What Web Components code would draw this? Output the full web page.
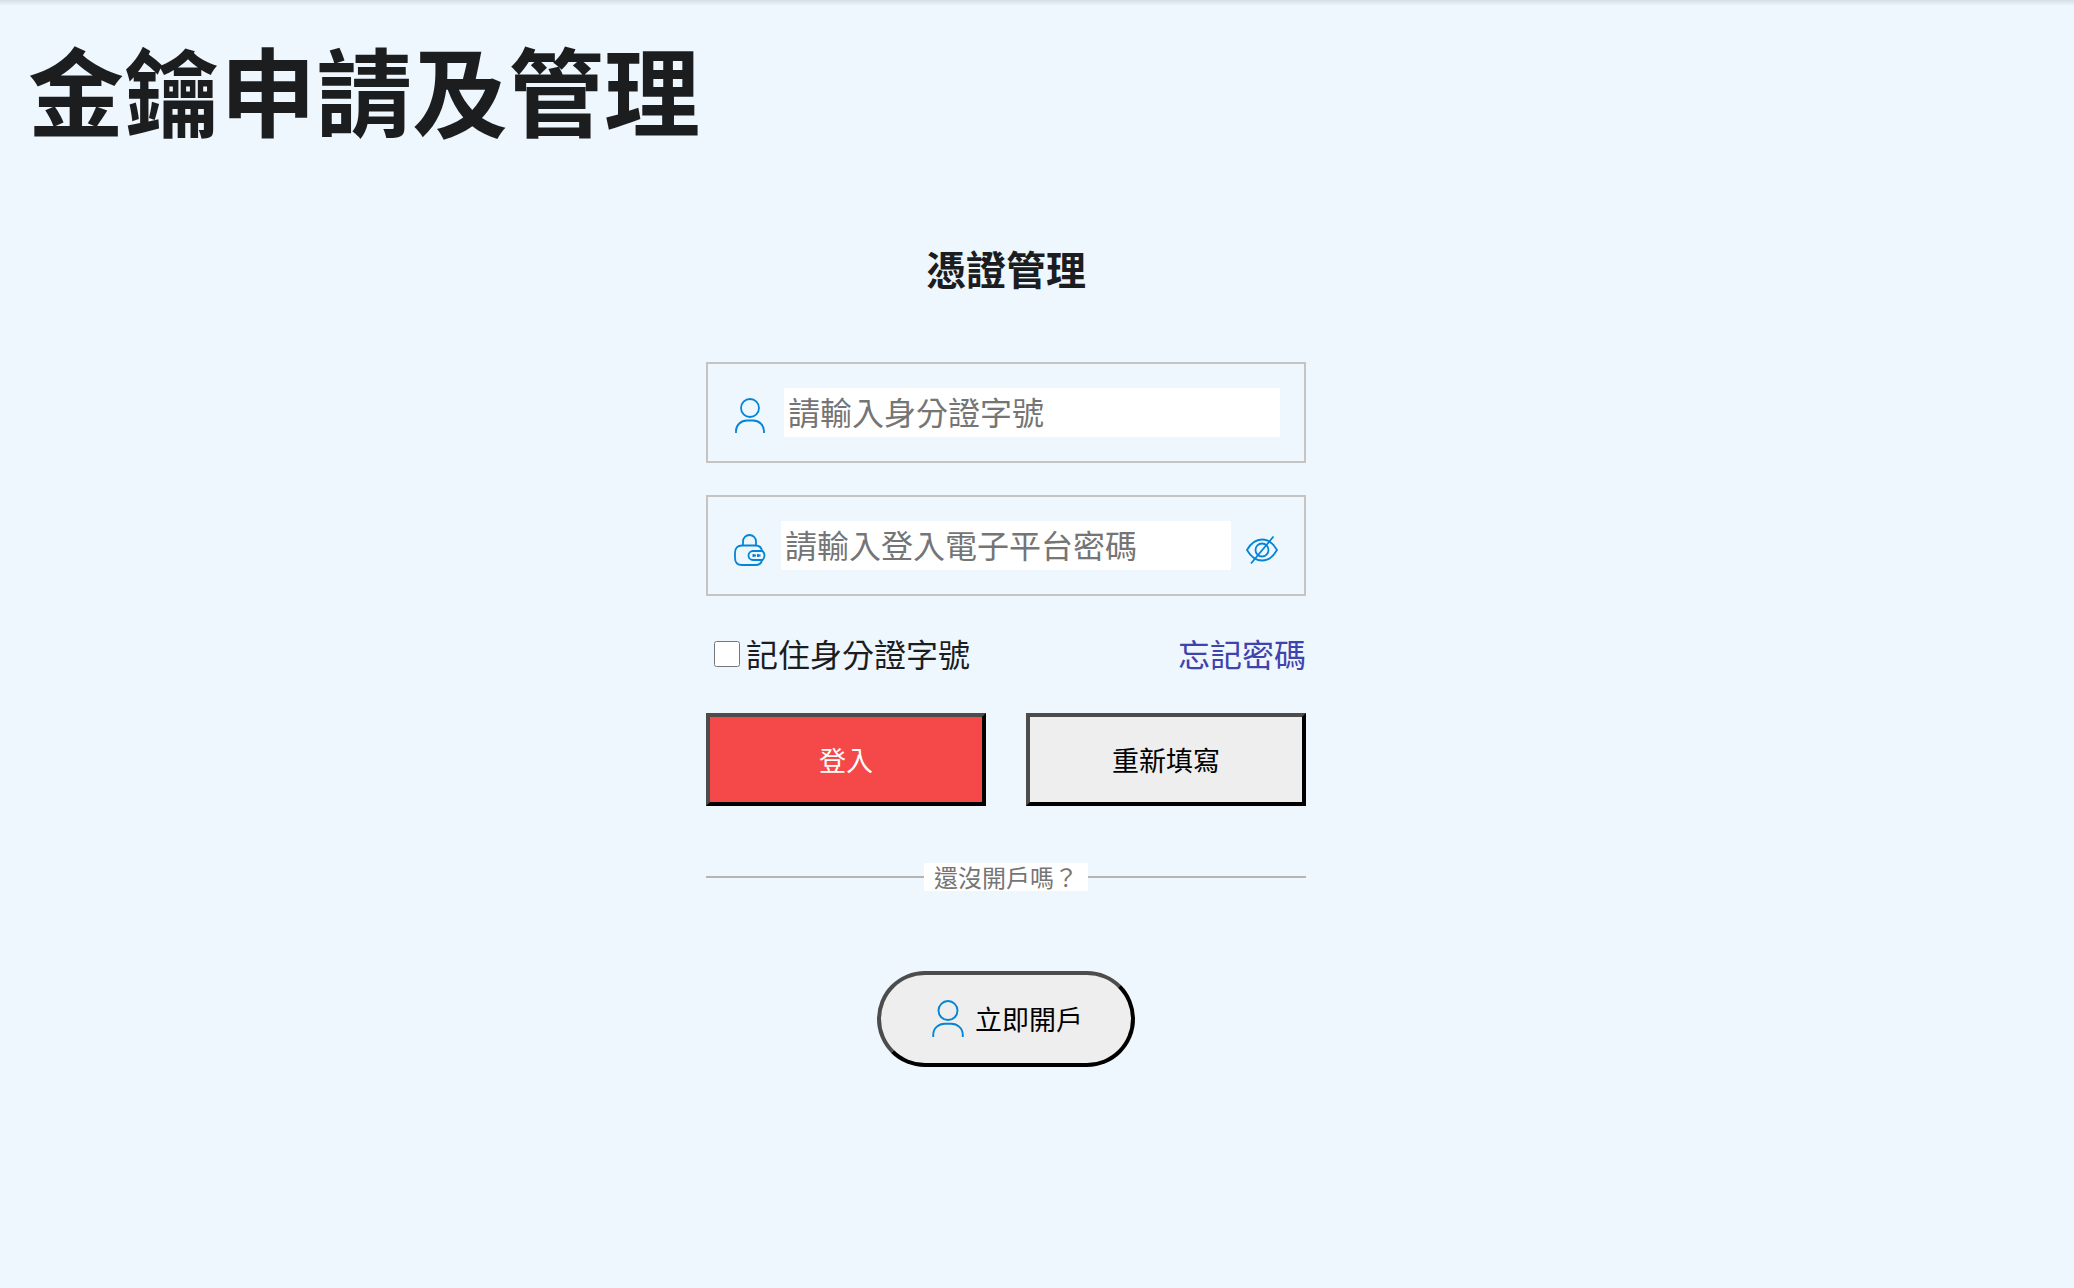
<!DOCTYPE html>
<html lang="zh-Hant">
<head>
<meta charset="utf-8">
<meta name="viewport" content="width=device-width, initial-scale=1">
<title>金鑰申請及管理</title>
<style>
  body {
    margin: 0;
    min-height: 100vh;
    background: #eef6fe;
    color: #1c1d1f;
    font: 32px/48px "Noto Sans CJK TC", sans-serif;
  }
</style>
</head>
<body>

<key-page>
  <span slot="title">金鑰申請及管理</span>
  <login-form></login-form>
</key-page>

<script>
class LineIcon extends HTMLElement {
  constructor() {
    super();
    this.attachShadow({ mode : 'open' });
  }

  connectedCallback() {
    let shapes = {
      user: `
        <circle cx="18" cy="10" r="9"/>
        <path d="M4 35v-2C4 27 9 22.5 15 22.5h6c6 0 11 4.5 11 10.5v2"/>`,
      lock: `
        <path d="M11 14v-3.500a6.500 6.500 0 0 1 13 0V14"/>
        <path d="M30 20C29.5 16.5 27.5 14.5 23.5 14.5H10c-4.500 0-7 2.500-7 7V27c0 4.500 2.500 7 7 7h13.500c4 0 6-2 6.500-5"/>
        <path d="M30.500 20H21a4.500 4.500 0 0 0 0 9h9.500c1-1 2-3 2-4.500s-1-3.500-2-4.500z"/>
        <path d="M21.500 23v3M20.500 24.500h3.500M26 23v3M25 24.500h3.500"/>`,
      eye: `
        <path d="M3 19C7 12 12 8.500 18 8.500S29 12 33 19C29 26 24 29.500 18 29.500S7 26 3 19z"/>
        <circle cx="18" cy="19" r="6.500"/>
        <path d="M7 32.500L29.500 5.500"/>`
    };
    this.shadowRoot.innerHTML = `
      <style>
        :host { display: block; width: 36px; height: 36px; }
        svg { display: block; width: 100%; height: 100%; }
      </style>
      <svg viewBox="0 0 36 36" fill="none" stroke="#0585d5" stroke-width="1.8" aria-hidden="true">
        ${shapes[this.getAttribute('name')]}
      </svg>
    `;
  }
}

class KeyPage extends HTMLElement {
  constructor() {
    super();
    this.attachShadow({ mode : 'open' });
    this.shadowRoot.innerHTML = `
      <style>
        :host {
          display: block;
        }
        .edge {
          height: 6px;
          background: linear-gradient(#d5dde6, #eef6fe);
        }
        main {
          padding: 14px 90px 48px 28px;
        }
        h1 {
          margin: 0 0 86px;
          font-size: 96px;
          line-height: 136px;
          font-weight: 700;
        }
      </style>
      <div class="edge"></div>
      <main>
        <h1><slot name="title"></slot></h1>
        <slot></slot>
      </main>
    `;
  }
}

class TextField extends HTMLElement {
  constructor() {
    super();
    this.attachShadow({ mode : 'open' });
  }

  connectedCallback() {
    let type = this.getAttribute('type') || 'text';
    let hint = this.getAttribute('hint');
    this.shadowRoot.innerHTML = `
      <style>
        :host {
          display: flex;
          align-items: center;
          gap: 13px;
          padding: 24px;
          border: 2px solid #c4c4c4;
        }
        :host([icon="user"]) {
          gap: 16px;
        }
        label {
          flex: none;
          padding-top: 6px;
        }
        input {
          flex: 1;
          min-width: 0;
          box-sizing: border-box;
          height: 49px;
          padding: 0 4px 4px;
          border: 0;
          background: #fff;
          font: inherit;
          color: inherit;
        }
        input::placeholder {
          color: #757575;
        }
      </style>
      <label for="box" aria-label="${hint}"><line-icon name="${this.getAttribute('icon')}"></line-icon></label>
      <input id="box" type="${type}" placeholder="${hint}">
      <slot></slot>
    `;
  }

  clear() {
    this.shadowRoot.querySelector('input').value = '';
  }

  toggle() {
    let input = this.shadowRoot.querySelector('input');
    input.type = input.type === 'password' ? 'text' : 'password';
  }
}

class PushButton extends HTMLElement {
  constructor() {
    super();
    this.attachShadow({ mode : 'open' });
    this.shadowRoot.innerHTML = `
      <style>
        :host {
          display: block;
        }
        button {
          display: flex;
          align-items: center;
          justify-content: center;
          gap: 8px;
          box-sizing: border-box;
          width: 100%;
          min-height: 93px;
          padding: 0;
          border: 4px solid;
          border-color: #4c4c4c #000 #000 #4c4c4c;
          background: #eee;
          color: #000;
          font: inherit;
          font-size: 27px;
        }
        :host([primary]) button {
          background: #f54848;
          color: #fff;
        }
        :host([pill]) button {
          min-height: 96px;
          padding: 0 48px;
          border-radius: 48px;
        }
      </style>
      <button type="button"><slot></slot></button>
    `;
  }
}

class TextDivider extends HTMLElement {
  constructor() {
    super();
    this.attachShadow({ mode : 'open' });
    this.shadowRoot.innerHTML = `
      <style>
        :host {
          display: flex;
          align-items: center;
          color: #757575;
          font-size: 24px;
          line-height: 28px;
        }
        :host::before,
        :host::after {
          content: "";
          flex: 1;
          height: 2px;
          background: #b5b5b5;
        }
        span {
          padding: 0 10px;
          background: #fff;
        }
      </style>
      <span><slot></slot></span>
    `;
  }
}

class LoginForm extends HTMLElement {
  constructor() {
    super();
    this.attachShadow({ mode : 'open' });
    this.shadowRoot.innerHTML = `
      <style>
        :host {
          display: block;
          max-width: 600px;
          margin: 0 auto;
        }
        h2 {
          margin: 0 0 68px;
          font-size: 40px;
          line-height: 52px;
          text-align: center;
        }
        text-field {
          margin-bottom: 32px;
        }
        .eye {
          padding: 6px 0 0;
          border: 0;
          background: none;
        }
        .row {
          display: flex;
          align-items: center;
          justify-content: space-between;
          margin: 33px 0 36px;
        }
        .row label {
          display: flex;
          align-items: center;
          gap: 6px;
        }
        .row input {
          width: 26px;
          height: 26px;
          margin: 2px 0 0 8px;
        }
        a {
          color: #3f43ad;
          text-decoration: none;
        }
        .buttons {
          display: grid;
          grid-template-columns: 1fr 1fr;
          gap: 40px;
          margin-bottom: 57px;
        }
        text-divider {
          margin-bottom: 80px;
        }
        push-button[pill] {
          width: fit-content;
          margin: 0 auto;
        }
        push-button line-icon {
          width: 38px;
          height: 38px;
        }
      </style>
      <h2>憑證管理</h2>
      <form>
        <text-field icon="user" hint="請輸入身分證字號"></text-field>
        <text-field icon="lock" type="password" hint="請輸入登入電子平台密碼">
          <button class="eye" type="button" aria-label="顯示密碼"><line-icon name="eye"></line-icon></button>
        </text-field>
        <div class="row">
          <label><input type="checkbox">記住身分證字號</label>
          <a href="#forgot">忘記密碼</a>
        </div>
        <div class="buttons">
          <push-button primary>登入</push-button>
          <push-button id="reset">重新填寫</push-button>
        </div>
      </form>
      <text-divider>還沒開戶嗎？</text-divider>
      <push-button pill><line-icon name="user"></line-icon>立即開戶</push-button>
    `;
  }

  connectedCallback() {
    let root = this.shadowRoot;

    root.querySelector('.eye').addEventListener('click', event => {
      event.target.closest('text-field').toggle();
    });

    root.querySelector('#reset').addEventListener('click', () => {
      root.querySelector('form').reset();
      root.querySelectorAll('text-field').forEach(field => field.clear());
    });
  }
}

customElements.define('line-icon', LineIcon);
customElements.define('text-field', TextField);
customElements.define('push-button', PushButton);
customElements.define('text-divider', TextDivider);
customElements.define('login-form', LoginForm);
customElements.define('key-page', KeyPage);
</script>
</body>
</html>
